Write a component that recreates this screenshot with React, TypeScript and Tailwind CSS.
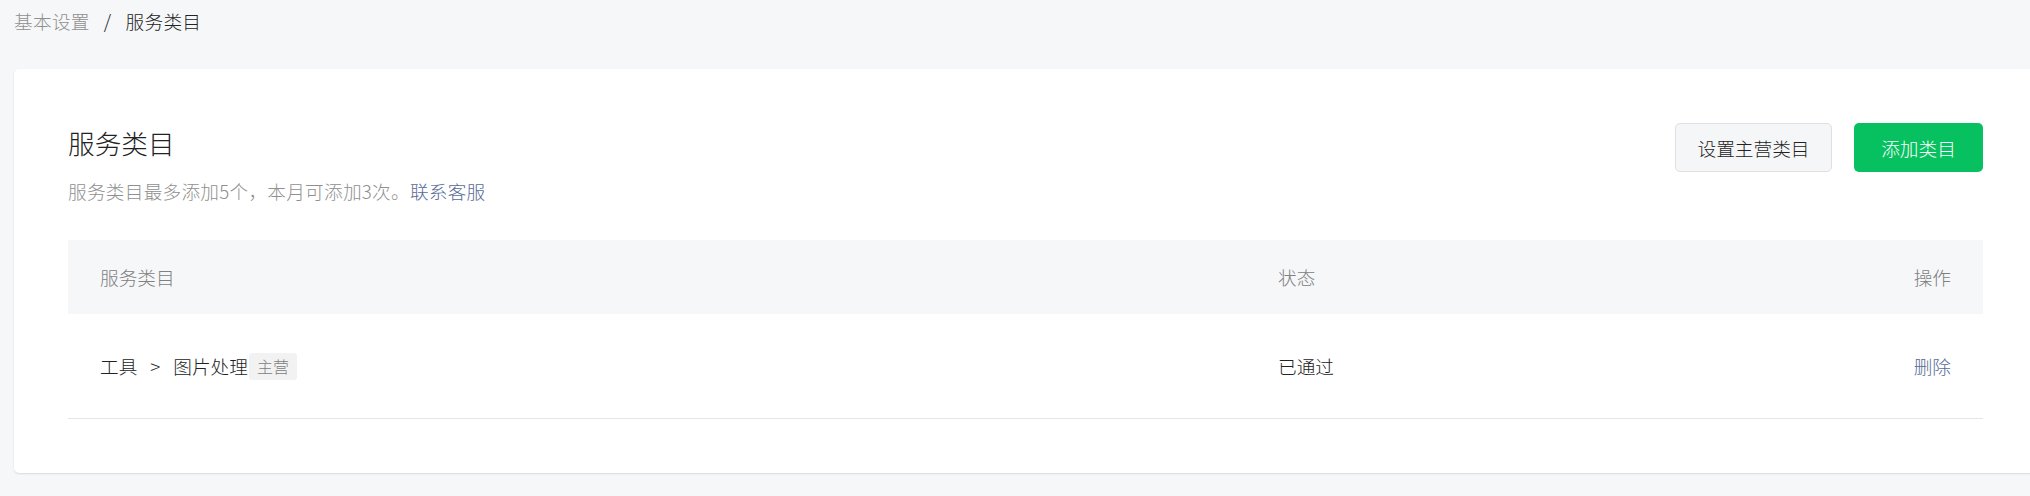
export default function App() {
  return (
    <div className="w-[2030px] h-[496px] overflow-hidden bg-[#f6f7f9] font-['Noto_Sans_CJK_SC',sans-serif] font-light text-[18.67px]">
      <div className="pt-[7px] pl-[14px] leading-[28px] flex items-center tracking-[0.3px]">
        <span className="text-[#8f8f8f]">基本设置</span>
        <span className="mx-[14px] text-[#222222]">/</span>
        <span className="text-[#222222]">服务类目</span>
      </div>
      <div className="mt-[34px] ml-[14px] w-[2023px] bg-white rounded-[5px] shadow-[0_1px_2px_rgba(0,0,0,0.12)] px-[54px] pt-[54px] pb-[54px]">
        <div className="flex justify-between items-start">
          <div>
            <div className="text-[26.67px] leading-[40px] text-[#222222]">服务类目</div>
            <div className="mt-[14px] leading-[28px] text-[#8f8f8f] tracking-[0.25px]">
              服务类目最多添加5个，本月可添加3次。<span className="text-[#576b95]">联系客服</span>
            </div>
          </div>
          <div className="flex gap-[22px]">
            <button className="h-[49px] w-[157px] rounded-[5px] border border-[#e0e0e0] bg-[#f5f6f7] text-[#222222]">设置主营类目</button>
            <button className="h-[49px] w-[129px] rounded-[5px] bg-[#07c160] text-white">添加类目</button>
          </div>
        </div>
        <div className="mt-[35px]">
          <div className="flex items-center h-[74px] bg-[#f6f7f9] text-[#808080]">
            <div className="w-[1178px] pl-[32px]">服务类目</div>
            <div className="flex-1 pl-[32px]">状态</div>
            <div className="w-[200px] pr-[32px] text-right">操作</div>
          </div>
          <div className="flex items-center h-[105px] border-b border-[#e5e5e5] text-[#222222]">
            <div className="w-[1178px] pl-[32px] flex items-center">
              <span>工具</span>
              <span className="mx-[13px]">&gt;</span>
              <span>图片处理</span>
              <span className="ml-[1px] h-[27px] px-[8px] rounded-[3px] bg-[#f2f2f2] text-[#808080] text-[16px] leading-[27px]">主营</span>
            </div>
            <div className="flex-1 pl-[32px]">已通过</div>
            <div className="w-[200px] pr-[32px] text-right text-[#576b95]">删除</div>
          </div>
        </div>
      </div>
    </div>
  );
}
